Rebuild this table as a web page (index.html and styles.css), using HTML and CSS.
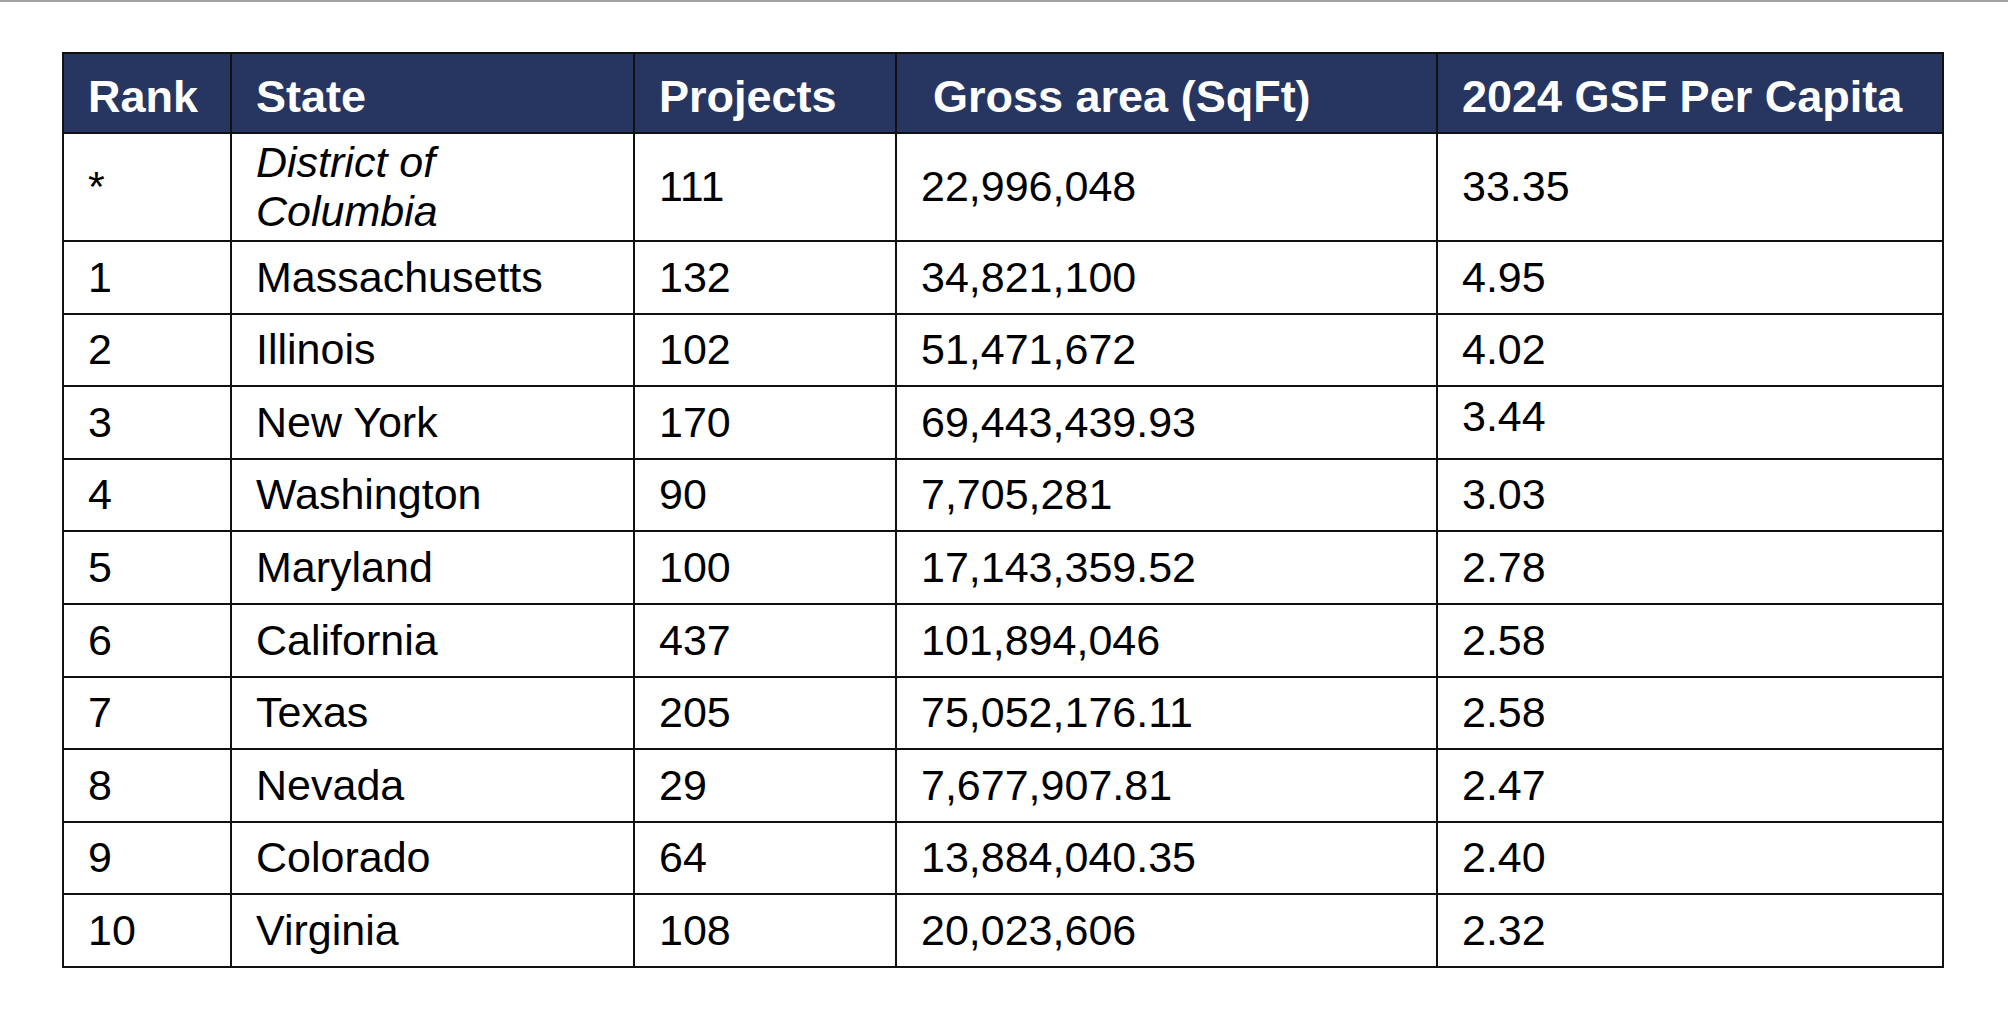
FILE: index.html
```html
<!DOCTYPE html>
<html lang="en">
<head>
<meta charset="utf-8">
<title>Top states by GSF per capita</title>
<link rel="stylesheet" href="styles.css">
</head>
<body>
<div class="topbar"></div>
<main class="page">
  <table class="rank-table">
    <colgroup>
      <col class="c-rank">
      <col class="c-state">
      <col class="c-projects">
      <col class="c-area">
      <col class="c-capita">
    </colgroup>
    <thead>
      <tr>
        <th>Rank</th>
        <th>State</th>
        <th>Projects</th>
        <th class="indent">Gross area (SqFt)</th>
        <th>2024 GSF Per Capita</th>
      </tr>
    </thead>
    <tbody>
      <tr class="tall">
        <td>*</td>
        <td class="italic">District of<br>Columbia</td>
        <td>111</td>
        <td>22,996,048</td>
        <td>33.35</td>
      </tr>
      <tr><td>1</td><td>Massachusetts</td><td>132</td><td>34,821,100</td><td>4.95</td></tr>
      <tr><td>2</td><td>Illinois</td><td>102</td><td>51,471,672</td><td>4.02</td></tr>
      <tr><td>3</td><td>New York</td><td>170</td><td>69,443,439.93</td><td class="raised">3.44</td></tr>
      <tr><td>4</td><td>Washington</td><td>90</td><td>7,705,281</td><td>3.03</td></tr>
      <tr><td>5</td><td>Maryland</td><td>100</td><td>17,143,359.52</td><td>2.78</td></tr>
      <tr><td>6</td><td>California</td><td>437</td><td>101,894,046</td><td>2.58</td></tr>
      <tr><td>7</td><td>Texas</td><td>205</td><td>75,052,176.11</td><td>2.58</td></tr>
      <tr><td>8</td><td>Nevada</td><td>29</td><td>7,677,907.81</td><td>2.47</td></tr>
      <tr><td>9</td><td>Colorado</td><td>64</td><td>13,884,040.35</td><td>2.40</td></tr>
      <tr><td>10</td><td>Virginia</td><td>108</td><td>20,023,606</td><td>2.32</td></tr>
    </tbody>
  </table>
</main>
</body>
</html>
```
FILE: styles.css
```css
html, body {
  margin: 0;
  padding: 0;
  background: #ffffff;
}

body {
  font-family: "Liberation Sans", Arial, Helvetica, sans-serif;
  color: #000000;
}

.topbar {
  height: 2px;
  background: #a3a3a3;
}

.page {
  padding: 50px 0 0 62px;
}

.rank-table {
  border-collapse: collapse;
  table-layout: fixed;
  width: 1880px;
}

.c-rank { width: 168px; }
.c-state { width: 403px; }
.c-projects { width: 262px; }
.c-area { width: 541px; }
.c-capita { width: 506px; }

.rank-table th,
.rank-table td {
  border: 2px solid #111111;
  text-align: left;
  padding: 0 0 0 24px;
  vertical-align: middle;
  white-space: nowrap;
}

.rank-table th {
  background: #263661;
  color: #ffffff;
  font-weight: bold;
  font-size: 45px;
  height: 80px;
  padding-top: 7px;
  box-sizing: border-box;
}

.rank-table th.indent {
  padding-left: 36px;
}

.rank-table td {
  font-size: 43px;
  line-height: 1.15;
  height: 72.6px;
  box-sizing: border-box;
}

.rank-table tr.tall td {
  height: 108px;
}

.rank-table td.italic {
  font-style: italic;
}

.rank-table td.raised {
  padding-bottom: 12px;
}
```
